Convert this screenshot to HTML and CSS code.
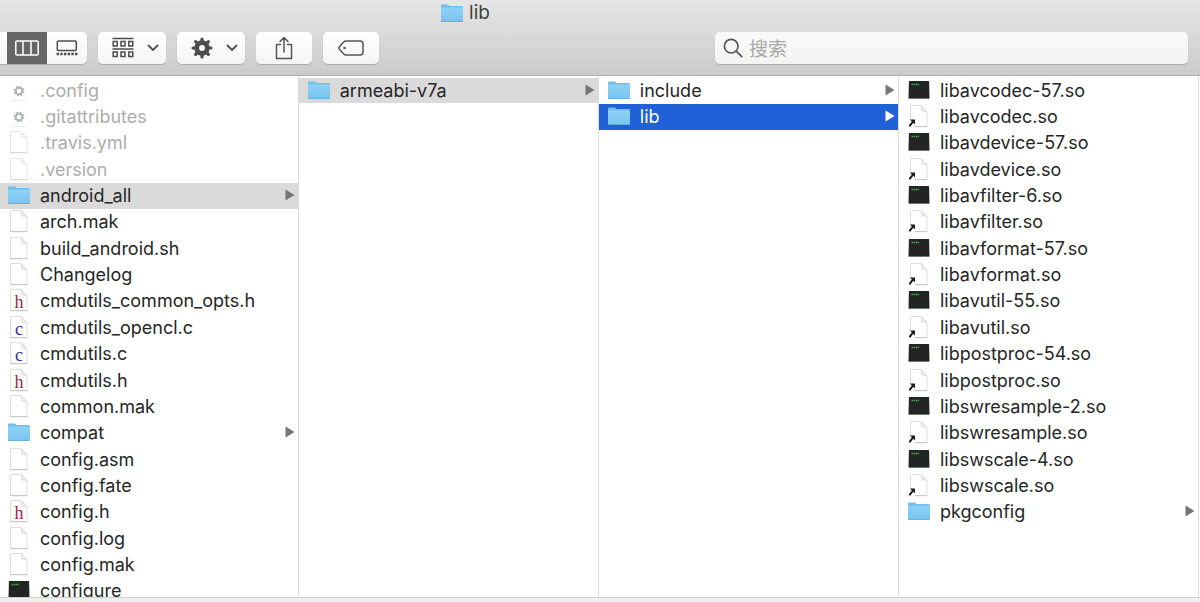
FILE: index.html
```html
<!DOCTYPE html>
<html lang="zh-CN">
<head>
<meta charset="utf-8">
<meta name="viewport" content="width=device-width, initial-scale=1">
<title>lib</title>
<link rel="stylesheet" href="styles.css">
</head>
<body>
<svg class="sprite" aria-hidden="true">
  <defs>
    <linearGradient id="folder-fill" x1="0" y1="0" x2="0" y2="1"><stop offset="0" stop-color="#8fd1f5"/><stop offset="1" stop-color="#79c5f1"/></linearGradient>
    <symbol id="folder" viewBox="0 0 24 24">
      <path d="M1 4.600q0-1.100 1.100-1.100h5.200q.8 0 1.300.6l.8.9h12.400q1.100 0 1.100 1V9H1z" fill="#6fbfe9"/>
      <path d="M1 6.500h22v13.300q0 .7-.7.7H1.700q-.7 0-.7-.7z" fill="url(#folder-fill)"/>
      <path d="M1 20.400h22" stroke="#62aeda" stroke-width="1"/>
    </symbol>
    <symbol id="page" viewBox="0 0 24 24">
      <path d="M3.500 1.500h10.500l6 6.500v14.500h-16.500z" fill="#fff" stroke="#dedede"/>
      <path d="M14 1.500q1.200 2.500.7 5.500q3-.5 5.300 1z" fill="#f1f1f1" stroke="#d6d6d6" stroke-width=".8"/>
      <path d="M3 22.700h17.500" stroke="#bdbdbd" stroke-width=".8"/>
    </symbol>
    <symbol id="cog" viewBox="0 0 24 24">
      <circle cx="12" cy="13" r="3.300" fill="none" stroke="#8c9494" stroke-width="1.900"/>
      <circle cx="12" cy="13" r="4.600" fill="none" stroke="#8c9494" stroke-width="1.600" stroke-dasharray="1.800 1.813"/>
      <path d="M5 22.500h15" stroke="#e0e0e0" stroke-width=".8"/>
    </symbol>
    <symbol id="exec" viewBox="0 0 24 24">
      <path d="M2.500 3h19q.6 0 .6.600l.4 16.400q0 .7-.7.7H2.200q-.7 0-.7-.7l.4-16.400q0-.6.6-.6z" fill="#222524"/>
      <path d="M1.800 20.500h20.400" stroke="#777" stroke-width=".8"/>
      <path d="M4.500 6.500h8" stroke="#48a34d" stroke-width="1.500" stroke-dasharray="1.500 .5"/>
    </symbol>
    <symbol id="alias" viewBox="0 0 24 24">
      <use href="#page"/>
      <path d="M2 15.500h5.500v8H2z" fill="#fff"/>
      <path d="M3 15.500h5v5l-1.700-1.700L3.500 22.500H2v-1.600l2.800-3.500z" fill="#1c1c1c"/>
    </symbol>
    <symbol id="arrow" viewBox="0 0 10 12"><path d="M.5.5 9.500 6 .5 11.500z" fill="currentColor"/></symbol>
    <symbol id="chevron" viewBox="0 0 12 8"><path d="M1.500 1.500 6 6l4.500-4.500" fill="none" stroke="#555" stroke-width="1.900" stroke-linecap="round" stroke-linejoin="round"/></symbol>
  </defs>
</svg>

<header class="chrome">
  <h1 class="title"><svg class="icon"><use href="#folder"/></svg>lib</h1>
  <div class="toolbar">
    <div class="segments">
      <button class="segment segment-edge" type="button" aria-label="列表"></button>
      <button class="segment segment-on" type="button" aria-label="分栏">
        <svg width="24" height="16" viewBox="0 0 24 16"><rect x=".8" y="1" width="22.400" height="14" rx="1" fill="none" stroke="#fff" stroke-width="1.500"/><path d="M8 1v14M16 1v14" stroke="#fff" stroke-width="1.500"/></svg>
      </button>
      <button class="segment" type="button" aria-label="画廊">
        <svg width="22" height="16" viewBox="0 0 22 16"><rect x="1.300" y="1" width="19" height="9.500" rx="1" fill="none" stroke="#4d4d4d" stroke-width="1.500"/><path d="M.6 14h20.800" stroke="#4d4d4d" stroke-width="2.600" stroke-dasharray="2.400 1.280"/></svg>
      </button>
    </div>
    <button class="tool tool-menu" type="button" aria-label="分组">
      <svg width="22" height="22" viewBox="0 0 22 22" fill="none" stroke="#4d4d4d" stroke-width="1.500"><path d="M.5 1.500h21M.5 12h21"/><rect x="1.200" y="4.500" width="4" height="4.500"/><rect x="9" y="4.500" width="4" height="4.500"/><rect x="16.800" y="4.500" width="4" height="4.500"/><rect x="1.200" y="15" width="4" height="4.500"/><rect x="9" y="15" width="4" height="4.500"/><rect x="16.800" y="15" width="4" height="4.500"/></svg>
      <svg class="chevron"><use href="#chevron"/></svg>
    </button>
    <button class="tool tool-menu" type="button" aria-label="操作">
      <svg width="22" height="22" viewBox="0 0 22 22"><circle cx="11" cy="11" r="5.300" fill="none" stroke="#4d4d4d" stroke-width="4.800"/><g stroke="#4d4d4d" stroke-width="3.200" stroke-linecap="round"><path d="M11 2v2M11 18v2M2 11h2M18 11h2M4.640 4.640l1.410 1.410M15.950 15.950l1.410 1.410M4.640 17.360l1.410-1.410M15.950 6.050l1.410-1.410"/></g></svg>
      <svg class="chevron"><use href="#chevron"/></svg>
    </button>
    <button class="tool" type="button" aria-label="共享">
      <svg width="20" height="24" viewBox="0 0 20 24" fill="none" stroke="#555" stroke-width="1.500" stroke-linecap="round" stroke-linejoin="round"><path d="M6.500 8.500H2.500v14h15v-14h-4M10 16V2M6 5.500l4-4 4 4"/></svg>
    </button>
    <button class="tool" type="button" aria-label="标签">
      <svg width="26" height="16" viewBox="0 0 26 16"><path d="M8 1h14q3 0 3 3v8q0 3-3 3H8q-1.300 0-2.300-1L1.400 9.300q-1-1.300 0-2.600L5.700 2Q6.700 1 8 1z" fill="none" stroke="#555" stroke-width="1.500"/><circle cx="6.500" cy="8" r="1.300" fill="#555"/></svg>
    </button>
    <label class="search">
      <svg width="20" height="20" viewBox="0 0 20 20" fill="none" stroke="#555" stroke-width="1.700" stroke-linecap="round"><circle cx="8.200" cy="8.200" r="6.800"/><path d="m13.200 13.200 5.500 5.500"/></svg>
      <input type="search" placeholder="搜索" aria-label="搜索">
    </label>
  </div>
</header>

<main class="browser">
  <ul class="column">
    <li class="row row-hidden"><svg class="icon"><use href="#cog"/></svg>.config</li>
    <li class="row row-hidden"><svg class="icon"><use href="#cog"/></svg>.gitattributes</li>
    <li class="row row-hidden"><svg class="icon"><use href="#page"/></svg>.travis.yml</li>
    <li class="row row-hidden"><svg class="icon"><use href="#page"/></svg>.version</li>
    <li class="row row-open"><svg class="icon"><use href="#folder"/></svg>android_all<svg class="arrow"><use href="#arrow"/></svg></li>
    <li class="row"><svg class="icon"><use href="#page"/></svg>arch.mak</li>
    <li class="row"><svg class="icon"><use href="#page"/></svg>build_android.sh</li>
    <li class="row"><svg class="icon"><use href="#page"/></svg>Changelog</li>
    <li class="row"><svg class="icon" viewBox="0 0 24 24"><use href="#page"/><text class="glyph glyph-h" x="12" y="20">h</text></svg>cmdutils_common_opts.h</li>
    <li class="row"><svg class="icon" viewBox="0 0 24 24"><use href="#page"/><text class="glyph glyph-c" x="12" y="20">c</text></svg>cmdutils_opencl.c</li>
    <li class="row"><svg class="icon" viewBox="0 0 24 24"><use href="#page"/><text class="glyph glyph-c" x="12" y="20">c</text></svg>cmdutils.c</li>
    <li class="row"><svg class="icon" viewBox="0 0 24 24"><use href="#page"/><text class="glyph glyph-h" x="12" y="20">h</text></svg>cmdutils.h</li>
    <li class="row"><svg class="icon"><use href="#page"/></svg>common.mak</li>
    <li class="row"><svg class="icon"><use href="#folder"/></svg>compat<svg class="arrow"><use href="#arrow"/></svg></li>
    <li class="row"><svg class="icon"><use href="#page"/></svg>config.asm</li>
    <li class="row"><svg class="icon"><use href="#page"/></svg>config.fate</li>
    <li class="row"><svg class="icon" viewBox="0 0 24 24"><use href="#page"/><text class="glyph glyph-h" x="12" y="20">h</text></svg>config.h</li>
    <li class="row"><svg class="icon"><use href="#page"/></svg>config.log</li>
    <li class="row"><svg class="icon"><use href="#page"/></svg>config.mak</li>
    <li class="row"><svg class="icon"><use href="#exec"/></svg>configure</li>
  </ul>
  <ul class="column">
    <li class="row row-open"><svg class="icon"><use href="#folder"/></svg>armeabi-v7a<svg class="arrow"><use href="#arrow"/></svg></li>
  </ul>
  <ul class="column">
    <li class="row"><svg class="icon"><use href="#folder"/></svg>include<svg class="arrow"><use href="#arrow"/></svg></li>
    <li class="row row-selected"><svg class="icon"><use href="#folder"/></svg>lib<svg class="arrow"><use href="#arrow"/></svg></li>
  </ul>
  <ul class="column">
    <li class="row"><svg class="icon"><use href="#exec"/></svg>libavcodec-57.so</li>
    <li class="row"><svg class="icon"><use href="#alias"/></svg>libavcodec.so</li>
    <li class="row"><svg class="icon"><use href="#exec"/></svg>libavdevice-57.so</li>
    <li class="row"><svg class="icon"><use href="#alias"/></svg>libavdevice.so</li>
    <li class="row"><svg class="icon"><use href="#exec"/></svg>libavfilter-6.so</li>
    <li class="row"><svg class="icon"><use href="#alias"/></svg>libavfilter.so</li>
    <li class="row"><svg class="icon"><use href="#exec"/></svg>libavformat-57.so</li>
    <li class="row"><svg class="icon"><use href="#alias"/></svg>libavformat.so</li>
    <li class="row"><svg class="icon"><use href="#exec"/></svg>libavutil-55.so</li>
    <li class="row"><svg class="icon"><use href="#alias"/></svg>libavutil.so</li>
    <li class="row"><svg class="icon"><use href="#exec"/></svg>libpostproc-54.so</li>
    <li class="row"><svg class="icon"><use href="#alias"/></svg>libpostproc.so</li>
    <li class="row"><svg class="icon"><use href="#exec"/></svg>libswresample-2.so</li>
    <li class="row"><svg class="icon"><use href="#alias"/></svg>libswresample.so</li>
    <li class="row"><svg class="icon"><use href="#exec"/></svg>libswscale-4.so</li>
    <li class="row"><svg class="icon"><use href="#alias"/></svg>libswscale.so</li>
    <li class="row"><svg class="icon"><use href="#folder"/></svg>pkgconfig<svg class="arrow"><use href="#arrow"/></svg></li>
  </ul>
</main>
</body>
</html>
```
FILE: styles.css
```css
* { box-sizing: border-box; }

body {
  margin: 0;
  height: 100vh;
  display: flex;
  flex-direction: column;
  overflow: hidden;
  background: #efefef;
  color: #262626;
  font: 18px/24px Inter, "Noto Sans CJK SC", sans-serif;
}

.sprite { position: absolute; width: 0; height: 0; }

.chrome {
  flex: none;
  background: linear-gradient(#e6e6e6, #cbcbcb);
  border-bottom: 1px solid #adadad;
}

.title {
  margin: 0;
  height: 32px;
  padding: 0 270px 7px 0;
  display: flex;
  justify-content: center;
  align-items: center;
  gap: 5px;
  font-size: 19px;
  font-weight: 400;
  color: #404040;
}

.toolbar {
  display: flex;
  align-items: center;
  gap: 11px;
  padding: 0 12px 11px 0;
}

.segments,
.tool,
.search {
  height: 32px;
  border-radius: 5px;
  background: linear-gradient(#fff, #f4f4f4);
  box-shadow: 0 1px 1px #a8a8a8;
}

.segments {
  display: flex;
  overflow: hidden;
  border-radius: 0 5px 5px 0;
}

.segment,
.tool {
  border: 0;
  padding: 0;
  display: flex;
  align-items: center;
  justify-content: center;
}

.segment { width: 40px; padding-right: 1px; background: transparent; }
.segment-edge { width: 7px; }
.segment-on { background: #666; }

.tool { width: 56px; }
.tool-menu {
  width: 68px;
  justify-content: space-between;
  padding: 0 7px 0 14px;
}

.chevron { width: 12px; height: 8px; }

.search {
  flex: 1;
  margin-left: 325px;
  padding: 0 8px;
  display: flex;
  align-items: center;
  gap: 6px;
  background: linear-gradient(#fafafa, #f3f3f3);
}

.search input {
  flex: 1;
  min-width: 0;
  border: 0;
  padding: 3px 0 0;
  outline: 0;
  background: transparent;
  font: inherit;
  font-size: 19px;
}

.search input::placeholder { color: #a9a9a9; }

.browser {
  flex: 1;
  min-height: 0;
  margin-bottom: 4px;
  padding-right: 1px;
  display: grid;
  grid-template-columns: calc(25% - 1px) repeat(3, 1fr);
  overflow: hidden;
  background: #fff;
  border-bottom: 1px solid #d0d0d0;
}

.column {
  margin: 0;
  padding: 2px 0 0;
  height: 528px;
  list-style: none;
  display: grid;
  grid-template-rows: repeat(20, 1fr);
  row-gap: 1px;
  border-right: 1px solid #dcdcdc;
}

.row {
  min-height: 0;
  display: flex;
  align-items: center;
  gap: 9px;
  padding: 0 3px 0 7px;
  white-space: nowrap;
}

.column + .column .row { padding-left: 8px; }

.row svg { margin-bottom: 2px; }

.row-hidden { color: #adadad; }
.row-hidden .icon { opacity: 0.7; }
.row-open { background: #dadada; }
.row-selected { background: #2161d8; color: #fff; }

.icon { flex: none; width: 24px; height: 24px; }

.arrow {
  flex: none;
  width: 10px;
  height: 12px;
  margin-left: auto;
  color: #767676;
}
.row-selected .arrow { color: #fff; }

.glyph {
  font: 18px "Liberation Serif", serif;
  text-anchor: middle;
}
.glyph-h { fill: #9c2840; }
.glyph-c { fill: #35308c; }
```
